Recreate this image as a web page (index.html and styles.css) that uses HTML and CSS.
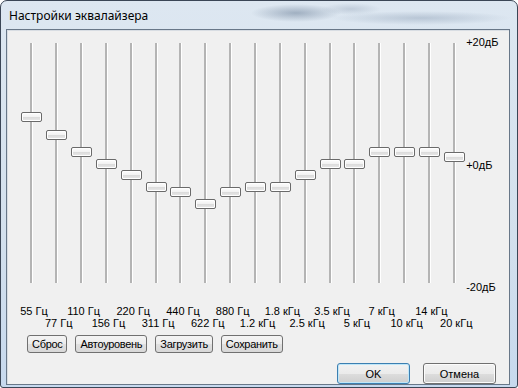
FILE: index.html
```html
<!DOCTYPE html>
<html lang="ru">
<head>
    <meta charset="UTF-8">
    <title>Настройки эквалайзера</title>
    <link rel="stylesheet" href="styles.css">
</head>
<body>
    <div class="window">
        <div class="titlebar">Настройки эквалайзера</div>
        <div class="client">
            <!-- sliders + dB scale -->
            <div class="eq">
                <div class="bands">
                    <div class="band"><div class="track"></div><div class="thumb" style="top:69px"></div></div>
                    <div class="band"><div class="track"></div><div class="thumb" style="top:87px"></div></div>
                    <div class="band"><div class="track"></div><div class="thumb" style="top:104px"></div></div>
                    <div class="band"><div class="track"></div><div class="thumb" style="top:116px"></div></div>
                    <div class="band"><div class="track"></div><div class="thumb" style="top:127px"></div></div>
                    <div class="band"><div class="track"></div><div class="thumb" style="top:139px"></div></div>
                    <div class="band"><div class="track"></div><div class="thumb" style="top:144px"></div></div>
                    <div class="band"><div class="track"></div><div class="thumb" style="top:156px"></div></div>
                    <div class="band"><div class="track"></div><div class="thumb" style="top:144px"></div></div>
                    <div class="band"><div class="track"></div><div class="thumb" style="top:139px"></div></div>
                    <div class="band"><div class="track"></div><div class="thumb" style="top:139px"></div></div>
                    <div class="band"><div class="track"></div><div class="thumb" style="top:127px"></div></div>
                    <div class="band"><div class="track"></div><div class="thumb" style="top:116px"></div></div>
                    <div class="band"><div class="track"></div><div class="thumb" style="top:116px"></div></div>
                    <div class="band"><div class="track"></div><div class="thumb" style="top:104px"></div></div>
                    <div class="band"><div class="track"></div><div class="thumb" style="top:104px"></div></div>
                    <div class="band"><div class="track"></div><div class="thumb" style="top:104px"></div></div>
                    <div class="band"><div class="track"></div><div class="thumb" style="top:109px"></div></div>
                </div>
                <div class="scale">
                    <span>+20дБ</span>
                    <span>+0дБ</span>
                    <span>-20дБ</span>
                </div>
            </div>

            <!-- frequency labels, every other one a row lower -->
            <div class="freqs">
                <span class="freq">55 Гц</span>
                <span class="freq low">77 Гц</span>
                <span class="freq">110 Гц</span>
                <span class="freq low">156 Гц</span>
                <span class="freq">220 Гц</span>
                <span class="freq low">311 Гц</span>
                <span class="freq">440 Гц</span>
                <span class="freq low">622 Гц</span>
                <span class="freq">880 Гц</span>
                <span class="freq low">1.2 кГц</span>
                <span class="freq">1.8 кГц</span>
                <span class="freq low">2.5 кГц</span>
                <span class="freq">3.5 кГц</span>
                <span class="freq low">5 кГц</span>
                <span class="freq">7 кГц</span>
                <span class="freq low">10 кГц</span>
                <span class="freq">14 кГц</span>
                <span class="freq low">20 кГц</span>
            </div>

            <div class="tools">
                <button class="small">Сброс</button>
                <button class="small">Автоуровень</button>
                <button class="small">Загрузить</button>
                <button class="small">Сохранить</button>
            </div>

            <div class="actions">
                <button class="big default">OK</button>
                <button class="big">Отмена</button>
            </div>
        </div>
    </div>
</body>
</html>
```

FILE: styles.css
```css
body {
    margin: 0;
    padding: 0;
    background-color: #ffffff;
    font-family: "Liberation Sans", Arial, sans-serif;
    font-size: 11px;
    color: #000000;
}

.window {
    width: 518px;
    height: 388px;
    box-sizing: border-box;
    display: flex;
    flex-direction: column;
    padding: 0 7px 6px 5px;
    border: 1px solid #3b4656;
    border-radius: 7px 7px 3px 3px;
    background:
        radial-gradient(ellipse 45px 9px at 295px 12px, rgba(100, 120, 145, 0.5), transparent),
        radial-gradient(ellipse 90px 7px at 420px 17px, rgba(140, 158, 180, 0.45), transparent),
        radial-gradient(ellipse 30px 6px at 350px 8px, rgba(150, 165, 185, 0.4), transparent),
        linear-gradient(to bottom, #dde7f1 0%, #d3e0ed 60%, #c7d9ee 100%);
}

.titlebar {
    height: 28px;
    line-height: 29px;
    padding-left: 3px;
    font-family: "Noto Sans", "Open Sans", sans-serif;
    font-size: 12px;
    color: #000000;
}

.client {
    flex: 1;
    display: flex;
    flex-direction: column;
    border: 1px solid #687788;
    background-color: #f0f0f0;
    box-shadow: inset 1px 1px 0 #d8dde3;
}

.eq {
    display: flex;
    margin: 13px 0 0 12px;
}

.bands {
    display: grid;
    grid-template-columns: repeat(18, 24.85px);
}

.band {
    position: relative;
    height: 240px;
    display: flex;
    justify-content: center;
}

.track {
    width: 2px;
    height: 100%;
    background-color: #b4b4b4;
    box-shadow: 1px 0 0 #ffffff;
}

.thumb {
    position: absolute;
    left: 50%;
    width: 21px;
    height: 10px;
    box-sizing: border-box;
    margin-left: -10px;
    border: 1px solid #6a6a6a;
    border-radius: 2px;
    background: linear-gradient(to bottom, #fdfdfd 0%, #f3f3f3 45%, #dcdcdc 55%, #e9e9e9 100%);
    box-shadow: inset 0 0 0 1px #ffffff;
}

.scale {
    display: flex;
    flex-direction: column;
    justify-content: space-between;
    height: 258px;
    margin-top: -7px;
    line-height: 13px;
}

.freqs {
    display: grid;
    grid-template-columns: repeat(18, 24.85px);
    height: 24px;
    margin: 11px 0 0 12px;
    line-height: 12px;
}

.freq {
    display: flex;
    justify-content: center;
    padding-left: 5px;
    white-space: nowrap;
}

.freq.low {
    margin-top: 12px;
}

button {
    font-family: "Liberation Sans", Arial, sans-serif;
    font-size: 11px;
    color: #000000;
    margin: 0;
    cursor: pointer;
}

.tools {
    display: flex;
    gap: 8px;
    margin: 6px 0 0 20px;
}

.small {
    height: 18px;
    padding: 0 4px;
    letter-spacing: -0.3px;
    border: 1px solid #707070;
    border-radius: 3px;
    background: linear-gradient(to bottom, #f4f4f4 0%, #ececec 50%, #e0e0e0 51%, #d8d8d8 100%);
}

.actions {
    display: flex;
    justify-content: flex-end;
    gap: 13px;
    margin: 10px 13px 0 0;
}

.big {
    width: 73px;
    height: 21px;
    padding: 0;
    border: 1px solid #707070;
    border-radius: 3px;
    background: linear-gradient(to bottom, #f2f2f2 0%, #ebebeb 50%, #dddddd 51%, #cfcfcf 100%);
    box-shadow: inset 0 0 0 1px #fcfcfc;
}

.big.default {
    border-color: #3c7fb1;
    box-shadow: inset 0 0 0 1px #bfe6f8;
}
```
